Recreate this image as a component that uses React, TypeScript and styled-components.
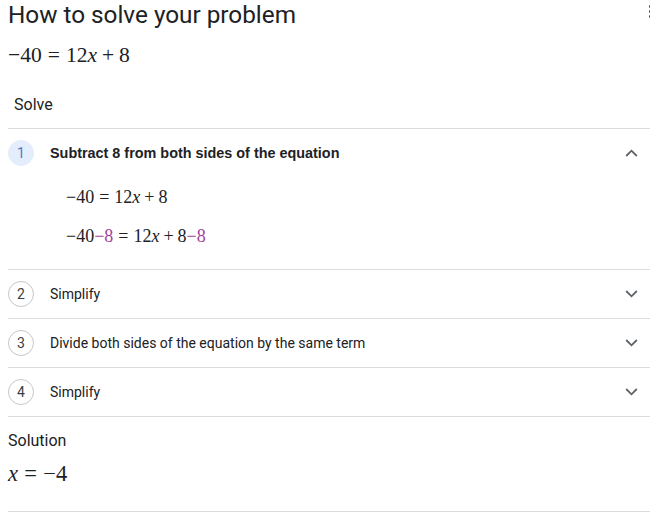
import React, { useState } from 'react';
import styled, { createGlobalStyle } from 'styled-components';

const GlobalStyle = createGlobalStyle`
  html, body {
    margin: 0;
    padding: 0;
    background: #ffffff;
  }
  body {
    font-family: Roboto, "Liberation Sans", Arial, sans-serif;
    color: #202124;
    overflow: hidden;
  }
`;

const Page = styled.div`
  position: relative;
  width: 650px;
  height: 512px;
  padding: 0 0 0 8px;
  box-sizing: border-box;
  overflow: hidden;
`;

const Title = styled.h1`
  margin: 0;
  padding-top: 1px;
  font-family: Roboto, "Liberation Sans", sans-serif;
  font-weight: 400;
  font-size: 24.3px;
  line-height: 28px;
  color: #202124;
`;

const Kebab = styled.div`
  position: absolute;
  top: 5px;
  right: -2px;
  display: flex;
  flex-direction: column;
  gap: 2px;

  span {
    display: block;
    width: 3px;
    height: 3px;
    border-radius: 50%;
    background: #3c4043;
  }
`;

const Math = styled.div<{ size: number }>`
  font-family: "Liberation Serif", "Times New Roman", serif;
  font-size: ${({ size }) => size}px;
  line-height: 22px;
  color: #202124;
  white-space: nowrap;

  i {
    font-style: italic;
  }
`;

const Op = styled.span<{ rel?: boolean }>`
  margin: 0 ${({ rel }) => (rel ? 0.278 : 0.222)}em;
`;

const Problem = styled(Math)`
  margin-top: 15px;
`;

const SectionLabel = styled.div<{ indent?: number }>`
  font-size: 16px;
  line-height: 20px;
  padding-left: ${({ indent }) => indent ?? 0}px;
  color: #202124;
`;

const SolveLabel = styled(SectionLabel)`
  margin-top: 29px;
  margin-bottom: 13px;
`;

const Steps = styled.div`
  border-top: 1px solid #dadce0;
`;

const Step = styled.div`
  border-bottom: 1px solid #dadce0;
`;

const StepHead = styled.div`
  display: flex;
  align-items: center;
  height: 48px;
  cursor: pointer;
`;

const Badge = styled.div<{ active?: boolean }>`
  width: 26px;
  height: 26px;
  box-sizing: border-box;
  border-radius: 50%;
  display: flex;
  align-items: center;
  justify-content: center;
  font-size: 14px;
  color: ${({ active }) => (active ? '#4a7cc9' : '#3c4043')};
  background: ${({ active }) => (active ? '#e3edfb' : '#ffffff')};
  border: 1px solid ${({ active }) => (active ? '#e3edfb' : '#c4c7cc')};
  flex-shrink: 0;
`;

const StepText = styled.div<{ bold?: boolean }>`
  flex: 1;
  margin-left: 16px;
  font-family: ${({ bold }) =>
    bold ? '"Liberation Sans", Arial, sans-serif' : 'Roboto, "Liberation Sans", sans-serif'};
  font-weight: ${({ bold }) => (bold ? 700 : 400)};
  font-size: ${({ bold }) => (bold ? 14.4 : 14)}px;
  color: #202124;
`;

const Chevron = styled.div`
  width: 24px;
  height: 24px;
  margin-right: 7px;
  display: flex;
  align-items: center;
  justify-content: center;
`;

const StepBody = styled.div`
  display: flex;
  flex-direction: column;
  gap: 17px;
  padding: 9px 0 22px 58px;
`;

const Accent = styled.span`
  color: #a043a0;
`;

const SolutionLabel = styled(SectionLabel)`
  margin-top: 14px;
`;

const Answer = styled(Math)`
  margin-top: 12px;
`;

const BottomRule = styled.div`
  margin-top: 26px;
  border-top: 1px solid #dadce0;
`;

const ChevronIcon = ({ up }: { up: boolean }) => (
  <svg width="13" height="8" viewBox="0 0 13 8">
    <path
      d={up ? 'M1.2 7 L6.5 1.7 L11.8 7' : 'M1.2 1 L6.5 6.3 L11.8 1'}
      fill="none"
      stroke="#5f6368"
      strokeWidth="1.8"
    />
  </svg>
);

const steps = [
  { n: 1, text: 'Subtract 8 from both sides of the equation' },
  { n: 2, text: 'Simplify' },
  { n: 3, text: 'Divide both sides of the equation by the same term' },
  { n: 4, text: 'Simplify' },
];

const App = () => {
  const [open, setOpen] = useState<number>(1);

  return (
    <Page>
      <GlobalStyle />
      <Kebab>
        <span />
        <span />
        <span />
      </Kebab>
      <Title>How to solve your problem</Title>
      <Problem size={21.6}>
        −40<Op rel>=</Op>12<i>x</i><Op>+</Op>8
      </Problem>
      <SolveLabel indent={6}>Solve</SolveLabel>
      <Steps>
        {steps.map((s) => {
          const isOpen = open === s.n;
          return (
            <Step key={s.n}>
              <StepHead onClick={() => setOpen(isOpen ? 0 : s.n)}>
                <Badge active={isOpen}>{s.n}</Badge>
                <StepText bold={isOpen}>{s.text}</StepText>
                <Chevron>
                  <ChevronIcon up={isOpen} />
                </Chevron>
              </StepHead>
              {isOpen && s.n === 1 && (
                <StepBody>
                  <Math size={18}>
                    −40<Op rel>=</Op>12<i>x</i><Op>+</Op>8
                  </Math>
                  <Math size={18}>
                    −40<Accent>−8</Accent><Op rel>=</Op>12<i>x</i><Op>+</Op>8<Accent>−8</Accent>
                  </Math>
                </StepBody>
              )}
            </Step>
          );
        })}
      </Steps>
      <SolutionLabel>Solution</SolutionLabel>
      <Answer size={22.5}>
        <i>x</i><Op rel>=</Op>−4
      </Answer>
      <BottomRule />
    </Page>
  );
};

export default App;
